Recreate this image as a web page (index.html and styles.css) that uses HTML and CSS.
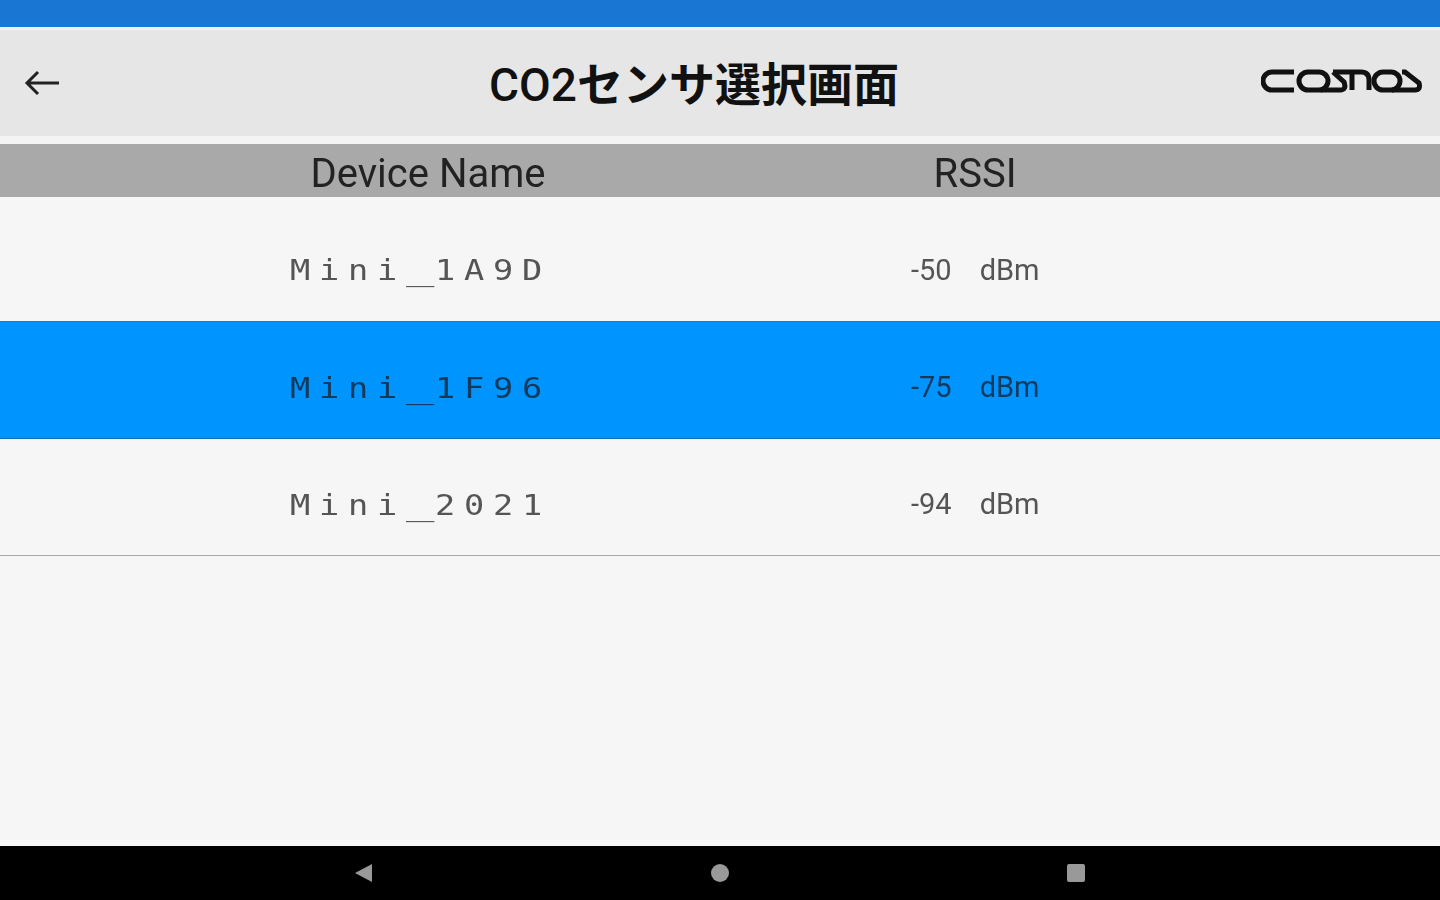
FILE: index.html
```html
<!DOCTYPE html>
<html lang="ja">
<head>
    <meta charset="UTF-8">
    <title>CO2センサ選択画面</title>
    <link rel="stylesheet" href="styles.css">
</head>
<body>
    <div class="status-bar"></div>

    <div class="toolbar">
        <svg class="back-icon" viewBox="0 0 36 28" aria-label="back">
            <path d="M35 14H3M14 3L3 14l11 11"/>
        </svg>
        <div class="title"><span class="title-latin">CO2</span>センサ選択画面</div>
        <svg class="logo" viewBox="0 0 161 24" aria-label="cosmos">
            <path d="M33 3H11a9 9 0 0 0 0 18H33"/>
            <path d="M47 3H58a9 9 0 0 1 0 18H47a9 9 0 0 1 0-18z"/>
            <path d="M72 3L83 13q3 8-4 8H60"/>
            <path d="M72 3H100q8 0 8 8V21M91 3V21"/>
            <path d="M122 3H130a9 9 0 0 1 0 18H122a9 9 0 0 1 0-18z"/>
            <path d="M141 3h3L158 14q2 7-4 7H131"/>
        </svg>
    </div>

    <div class="table-head">
        <div>Device Name</div>
        <div>RSSI</div>
    </div>

    <div class="device-list">
        <div class="device-row">
            <div class="device-name">Mini<span class="wide">_</span>1A9D</div>
            <div class="device-rssi"><span>-50</span><span>dBm</span></div>
        </div>
        <div class="device-row selected">
            <div class="device-name">Mini<span class="wide">_</span>1F96</div>
            <div class="device-rssi"><span>-75</span><span>dBm</span></div>
        </div>
        <div class="device-row">
            <div class="device-name">Mini<span class="wide">_</span>2021</div>
            <div class="device-rssi"><span>-94</span><span>dBm</span></div>
        </div>
    </div>

    <div class="nav-bar">
        <svg viewBox="0 0 18 18"><path d="M17 0v18L0 9z"/></svg>
        <svg viewBox="0 0 18 18"><circle cx="9" cy="9" r="9"/></svg>
        <svg viewBox="0 0 18 18"><rect x="0" y="0" width="18" height="18" rx="2"/></svg>
    </div>
</body>
</html>
```

FILE: styles.css
```css
body {
    margin: 0;
    display: flex;
    flex-direction: column;
    height: 900px;
    overflow: hidden;
    background-color: #f6f6f6;
    color: #222;
    font-family: Roboto, "Noto Sans CJK JP", sans-serif;
    filter: blur(0.7px);
}

.status-bar {
    height: 27px;
    background: #1976d2;
    border-bottom: 3px solid #f0f0f0;
}

.toolbar {
    display: grid;
    grid-template-columns: 465px 1fr auto;
    align-items: center;
    height: 106px;
    padding: 0 18px 0 24px;
    background: #e6e6e6;
    border-bottom: 8px solid #f4f4f4;
}

.back-icon {
    width: 36px;
    height: 28px;
}

.back-icon path {
    fill: none;
    stroke: #222;
    stroke-width: 3;
}

.title {
    font-size: 46px;
    font-weight: 700;
    color: #111;
    white-space: nowrap;
    margin-top: -4px;
}

.title-latin {
    font-weight: 500;
}

.logo {
    width: 161px;
    height: 24px;
    margin-top: -4px;
}

.logo path {
    fill: none;
    stroke: #111;
    stroke-width: 5;
}

.table-head {
    display: grid;
    grid-template-columns: 856px 238px;
    align-items: center;
    box-sizing: border-box;
    height: 53px;
    padding-top: 5px;
    background: #a9a9a9;
    font-size: 40px;
    color: #222;
    text-align: center;
}

.device-list {
    flex: 1;
}

.device-row {
    display: grid;
    grid-template-columns: 910px 1fr;
    align-items: center;
    box-sizing: border-box;
    height: 117px;
    padding-top: 14px;
    color: #555;
    border-bottom: 1px solid #aaa;
}

.device-row:first-child {
    height: 125px;
    padding-top: 21px;
    border-bottom-color: #1a78c8;
}

.device-row.selected {
    background: #0094ff;
    color: #123a5c;
    border-bottom-color: #0f6fb8;
}

.device-name {
    padding-left: 290px;
    padding-top: 2px;
    font-family: "DejaVu Sans Mono", monospace;
    font-size: 28px;
    letter-spacing: 7.3px;
    white-space: nowrap;
    transform: scaleX(1.2);
    transform-origin: 290px 0;
}

/* the underscore runs wider than the other letters */
.wide {
    display: inline-block;
    margin: 0 3.65px;
    letter-spacing: 0;
    transform: scaleX(1.4);
}

.device-rssi {
    display: flex;
    gap: 28px;
    font-size: 29px;
    margin-left: 1px;
}

.nav-bar {
    display: flex;
    justify-content: center;
    align-items: center;
    gap: 338px;
    height: 54px;
    background: #000;
}

.nav-bar svg {
    width: 18px;
    height: 18px;
    fill: #999;
}
```
